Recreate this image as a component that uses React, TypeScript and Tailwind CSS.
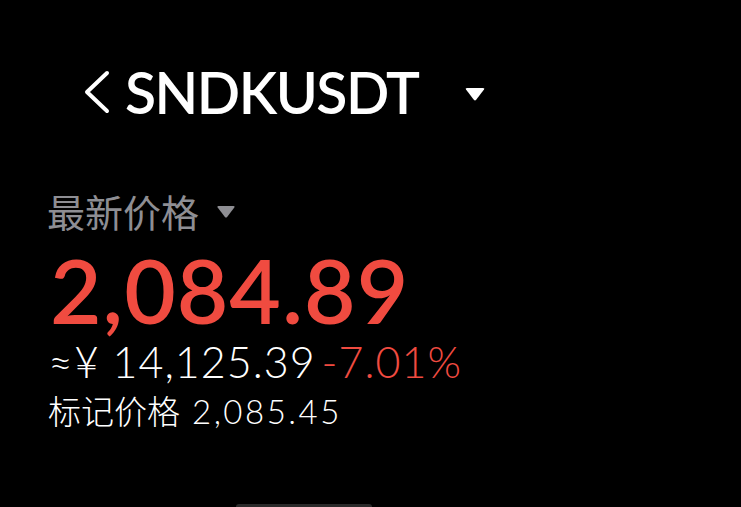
function Caret({ className }: { className?: string }) {
  return (
    <svg viewBox="0 0 20 13" className={className} fill="currentColor">
      <path d="M1 1.5 Q0 0 2 0 H18 Q20 0 19 1.5 L11.2 11.8 Q10 13 8.8 11.8 Z" />
    </svg>
  );
}

function BackArrow() {
  return (
    <svg viewBox="0 0 26 44" className="w-[26px] h-[44px]" fill="none" stroke="currentColor" strokeWidth={4} strokeLinecap="round" strokeLinejoin="round">
      <polyline points="23,3 3,22 23,41" />
    </svg>
  );
}

export default function App() {
  const symbol = 'SNDKUSDT';
  const lastPrice = '2,084.89';
  const cnyPrice = '14,125.39';
  const change = '-7.01%';
  const markPrice = '2,085.45';

  return (
    <div className="h-[507px] w-full bg-black text-white overflow-hidden flex flex-col font-['Lato','Noto_Sans_CJK_SC',sans-serif]">
      <div className="flex items-center pl-[84px] pt-[62px]">
        <BackArrow />
        <span className="ml-[15px] text-[57px] leading-[60px] font-semibold tracking-[-1.5px]">{symbol}</span>
        <Caret className="ml-[46px] w-[20px] h-[13px] mt-1" />
      </div>

      <div className="mt-[68px] pl-[47px] flex items-center">
        <span className="text-[38px] leading-[44px] text-[#8e8e93]">最新价格</span>
        <Caret className="ml-[17px] w-[20px] h-[12px] text-[#8e8e93]" />
      </div>

      <div className="pl-[50px] mt-[10px] text-[89px] leading-[92px] font-semibold text-[#f04b40] tracking-[1px]">
        {lastPrice}
      </div>

      <div className="pl-[48px] mt-[2px] text-[43px] leading-[48px] font-light tracking-[1px] flex items-baseline">
        <span>≈¥ {cnyPrice}</span>
        <span className="ml-[6px] text-[#f04b40]">{change}</span>
      </div>

      <div className="pl-[48px] mt-[5px] text-[33px] leading-[40px] font-light flex items-baseline">
        <span>标记价格</span>
        <span className="ml-[12px] tracking-[2.5px]">{markPrice}</span>
      </div>

      <div className="mt-auto flex justify-center pr-[134px]">
        <div className="w-[136px] h-[3px] rounded-t-full bg-[#2a2a2a]" />
      </div>
    </div>
  );
}
